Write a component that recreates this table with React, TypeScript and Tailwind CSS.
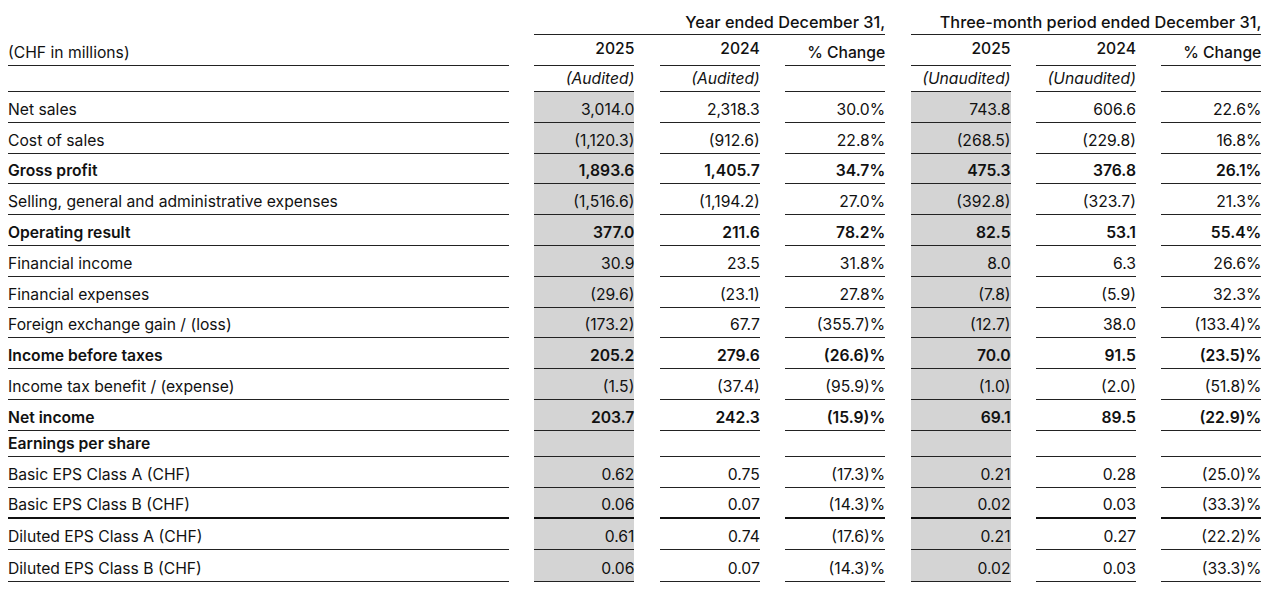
import { FunctionComponent } from "react";

type Row = {
  label: string;
  v: string[];
  bold?: boolean;
  thick?: boolean;
  h: string;
};

const rows: Row[] = [
  { label: "Net sales", h: "h-[30.8px]", v: ["3,014.0", "2,318.3", "30.0%", "743.8", "606.6", "22.6%"] },
  { label: "Cost of sales", h: "h-[30.8px]", v: ["(1,120.3)", "(912.6)", "22.8%", "(268.5)", "(229.8)", "16.8%"] },
  { label: "Gross profit", bold: true, h: "h-[30.8px]", v: ["1,893.6", "1,405.7", "34.7%", "475.3", "376.8", "26.1%"] },
  { label: "Selling, general and administrative expenses", h: "h-[30.8px]", v: ["(1,516.6)", "(1,194.2)", "27.0%", "(392.8)", "(323.7)", "21.3%"] },
  { label: "Operating result", bold: true, h: "h-[30.8px]", v: ["377.0", "211.6", "78.2%", "82.5", "53.1", "55.4%"] },
  { label: "Financial income", h: "h-[30.8px]", v: ["30.9", "23.5", "31.8%", "8.0", "6.3", "26.6%"] },
  { label: "Financial expenses", h: "h-[30.8px]", v: ["(29.6)", "(23.1)", "27.8%", "(7.8)", "(5.9)", "32.3%"] },
  { label: "Foreign exchange gain / (loss)", h: "h-[30.8px]", v: ["(173.2)", "67.7", "(355.7)%", "(12.7)", "38.0", "(133.4)%"] },
  { label: "Income before taxes", bold: true, h: "h-[30.8px]", v: ["205.2", "279.6", "(26.6)%", "70.0", "91.5", "(23.5)%"] },
  { label: "Income tax benefit / (expense)", h: "h-[30.8px]", v: ["(1.5)", "(37.4)", "(95.9)%", "(1.0)", "(2.0)", "(51.8)%"] },
  { label: "Net income", bold: true, h: "h-[30.8px]", v: ["203.7", "242.3", "(15.9)%", "69.1", "89.5", "(22.9)%"] },
  { label: "Earnings per share", bold: true, h: "h-[26.5px]", v: ["", "", "", "", "", ""] },
  { label: "Basic EPS Class A (CHF)", h: "h-[31px]", v: ["0.62", "0.75", "(17.3)%", "0.21", "0.28", "(25.0)%"] },
  { label: "Basic EPS Class B (CHF)", thick: true, h: "h-[31px]", v: ["0.06", "0.07", "(14.3)%", "0.02", "0.03", "(33.3)%"] },
  { label: "Diluted EPS Class A (CHF)", h: "h-[31px]", v: ["0.61", "0.74", "(17.6)%", "0.21", "0.27", "(22.2)%"] },
  { label: "Diluted EPS Class B (CHF)", h: "h-[32px]", v: ["0.06", "0.07", "(14.3)%", "0.02", "0.03", "(33.3)%"] },
];

const grid = "grid grid-cols-[501px_repeat(6,100px)] gap-x-[25.4px]";

const App: FunctionComponent = () => {
  return (
    <div className="min-h-screen bg-white pl-2 text-[15.7px] leading-5 text-[#111] font-['Inter',sans-serif]">
      {/* group headers */}
      <div className={`${grid} h-[35px] text-[16.3px] font-medium`}>
        <div />
        <div className="col-span-3 flex items-end justify-end border-b border-[#222] pb-[2px]">
          Year ended December 31,
        </div>
        <div className="col-span-3 flex items-end justify-end border-b border-[#222] pb-[2px]">
          Three-month period ended December 31,
        </div>
      </div>

      {/* year headers */}
      <div className={`${grid} h-[31px]`}>
        <div className="flex items-end border-b border-[#222] pb-[2px]">(CHF in millions)</div>
        {["2025", "2024", "% Change", "2025", "2024", "% Change"].map((t, i) => (
          <div
            key={i}
            className={`flex items-end justify-end border-b border-[#222] font-medium ${
              t === "% Change" ? "pb-[2px]" : "pb-[6px]"
            }`}
          >
            {t}
          </div>
        ))}
      </div>

      {/* audit status */}
      <div className={`${grid} h-[26px]`}>
        <div className="border-b border-[#222]" />
        {["(Audited)", "(Audited)", "", "(Unaudited)", "(Unaudited)", ""].map((t, i) => (
          <div key={i} className="flex items-end justify-end border-b border-[#222] pb-[2px] italic">
            {t}
          </div>
        ))}
      </div>

      {rows.map((r) => {
        const line = r.thick ? "border-b-2 border-[#111]" : "border-b border-[#222]";
        return (
          <div key={r.label} className={`${grid} ${r.h} ${r.bold ? "font-semibold" : ""}`}>
            <div className={`flex items-end pb-[2px] ${line}`}>{r.label}</div>
            {r.v.map((t, i) => (
              <div
                key={i}
                className={`flex items-end justify-end pb-[2px] ${line} ${
                  i === 0 || i === 3 ? "bg-[#d4d4d4]" : ""
                }`}
              >
                {t}
              </div>
            ))}
          </div>
        );
      })}
    </div>
  );
};

export default App;
